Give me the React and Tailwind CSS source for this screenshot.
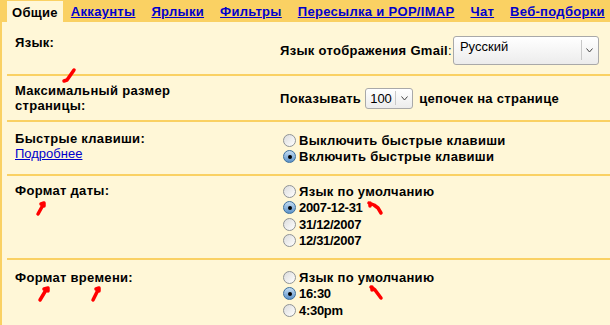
import React from 'react';

const tabs = ['Аккаунты', 'Ярлыки', 'Фильтры', 'Пересылка и POP/IMAP', 'Чат', 'Веб-подборки'];

function Radio({ checked, label, num }) {
  return (
    <div className="flex items-center h-[16.5px]">
      <span
        className={
          checked
            ? 'w-[13px] h-[13px] rounded-full border border-[#3b6f9e] bg-gradient-to-b from-[#c4dcf2] to-[#5d93c9] flex items-center justify-center'
            : 'w-[13px] h-[13px] rounded-full border border-[#8f9396] bg-gradient-to-br from-[#dcdcdc] to-white'
        }
      >
        {checked && <span className="w-[4px] h-[4px] rounded-full bg-black" />}
      </span>
      <span className={num ? 'ml-[3px] font-bold tracking-[-0.3px]' : 'ml-[3px] font-bold'}>{label}</span>
    </div>
  );
}

function Chevron() {
  return (
    <svg width="7" height="5" viewBox="0 0 7 5" className="text-[#444]">
      <path d="M0.5 0.5 L3.5 4 L6.5 0.5" fill="none" stroke="currentColor" strokeWidth="1" />
    </svg>
  );
}

function Marks() {
  return (
    <svg className="absolute inset-0 pointer-events-none" width="610" height="325">
      <g fill="none" stroke="#ff0000" strokeWidth="3.5" strokeLinecap="round" strokeLinejoin="round">
        <path d="M64 81 L67 80 L74 70" />
        <path d="M38 214 L43 205 M41 204 L44 203 L44 206" />
        <path d="M40 300 L46 290 M44 289 L48 288 L48 291" />
        <path d="M93 300 L98 290 M96 289 L99 288 L99 291" />
        <path d="M369 203 L374 205 L378 208 L381 213 M370 203 L370 206" />
        <path d="M371 287 L375 290 L378 294 L381 298 M372 287 L372 290" />
      </g>
    </svg>
  );
}

export default function App() {
  return (
    <div className="relative w-[610px] h-[325px] overflow-hidden bg-[#fff7d7] text-[13px] leading-[15px] tracking-[0.3px] text-black font-['Liberation_Sans',Arial,sans-serif]">
      <div className="flex items-end h-[22px] bg-[#fad163] pl-[7px]">
        <div className="h-[21px] bg-[#fff7d7] px-[5px] pt-[4px] font-bold">Общие</div>
        <div className="flex gap-[16px] ml-[8px] pb-[3px] font-bold">
          {tabs.map((t) => (
            <a key={t} href="#" className="text-[#0000cc] underline">
              {t}
            </a>
          ))}
        </div>
      </div>

      <div className="border-l-[2px] border-[#fad163] h-[303px] pl-[5px]">
        <div className="flex h-[54px] border-b-2 border-[#fad163]">
          <div className="w-[273px] pl-[8px] pt-[13px] font-bold">Язык:</div>
          <div className="flex items-start pt-[14px]">
            <span className="mt-[7px]">
              <b>Язык отображения Gmail</b>:
            </span>
            <div className="ml-[1px] w-[146px] h-[29px] border border-[#a9a9a9] rounded-[3px] bg-gradient-to-b from-white to-[#ececec] flex tracking-normal">
              <span className="flex-1 pl-[6px] pt-[2px]">Русский</span>
              <span className="w-px h-[20px] mt-[3px] bg-[#c8c8c8]" />
              <span className="w-[16px] flex items-center justify-center">
                <Chevron />
              </span>
            </div>
          </div>
        </div>

        <div className="flex h-[46px] border-b-2 border-[#fad163]">
          <div className="w-[273px] pl-[8px] pt-[7px] font-bold">
            Максимальный размер
            <br />
            страницы:
          </div>
          <div className="flex items-center h-[36px] pt-[8px] font-bold">
            <span>Показывать</span>
            <div className="ml-[4px] mr-[6px] w-[48px] h-[21px] border border-[#a9a9a9] rounded-[3px] bg-gradient-to-b from-white to-[#ececec] flex items-center font-normal tracking-normal">
              <span className="pl-[4px] w-[29px]">100</span>
              <span className="w-px h-[14px] bg-[#c8c8c8]" />
              <span className="flex-1 flex justify-center">
                <Chevron />
              </span>
            </div>
            <span>цепочек на странице</span>
          </div>
        </div>

        <div className="flex h-[54px] border-b-2 border-[#fad163]">
          <div className="w-[276px] pl-[8px] pt-[9px]">
            <div className="font-bold">Быстрые клавиши:</div>
            <a href="#" className="text-[#0000cc] underline tracking-normal">
              Подробнее
            </a>
          </div>
          <div className="pt-[10px]">
            <Radio label="Выключить быстрые клавиши" />
            <Radio checked label="Включить быстрые клавиши" />
          </div>
        </div>

        <div className="flex h-[84px] border-b-2 border-[#fad163]">
          <div className="w-[276px] pl-[8px] pt-[7px] font-bold">Формат даты:</div>
          <div className="pt-[7px]">
            <Radio label="Язык по умолчанию" />
            <Radio checked num label="2007-12-31" />
            <Radio num label="31/12/2007" />
            <Radio num label="12/31/2007" />
          </div>
        </div>

        <div className="flex">
          <div className="w-[276px] pl-[8px] pt-[10px] font-bold">Формат времени:</div>
          <div className="pt-[9px]">
            <Radio label="Язык по умолчанию" />
            <Radio checked num label="16:30" />
            <Radio num label="4:30pm" />
          </div>
        </div>
      </div>

      <Marks />
    </div>
  );
}
